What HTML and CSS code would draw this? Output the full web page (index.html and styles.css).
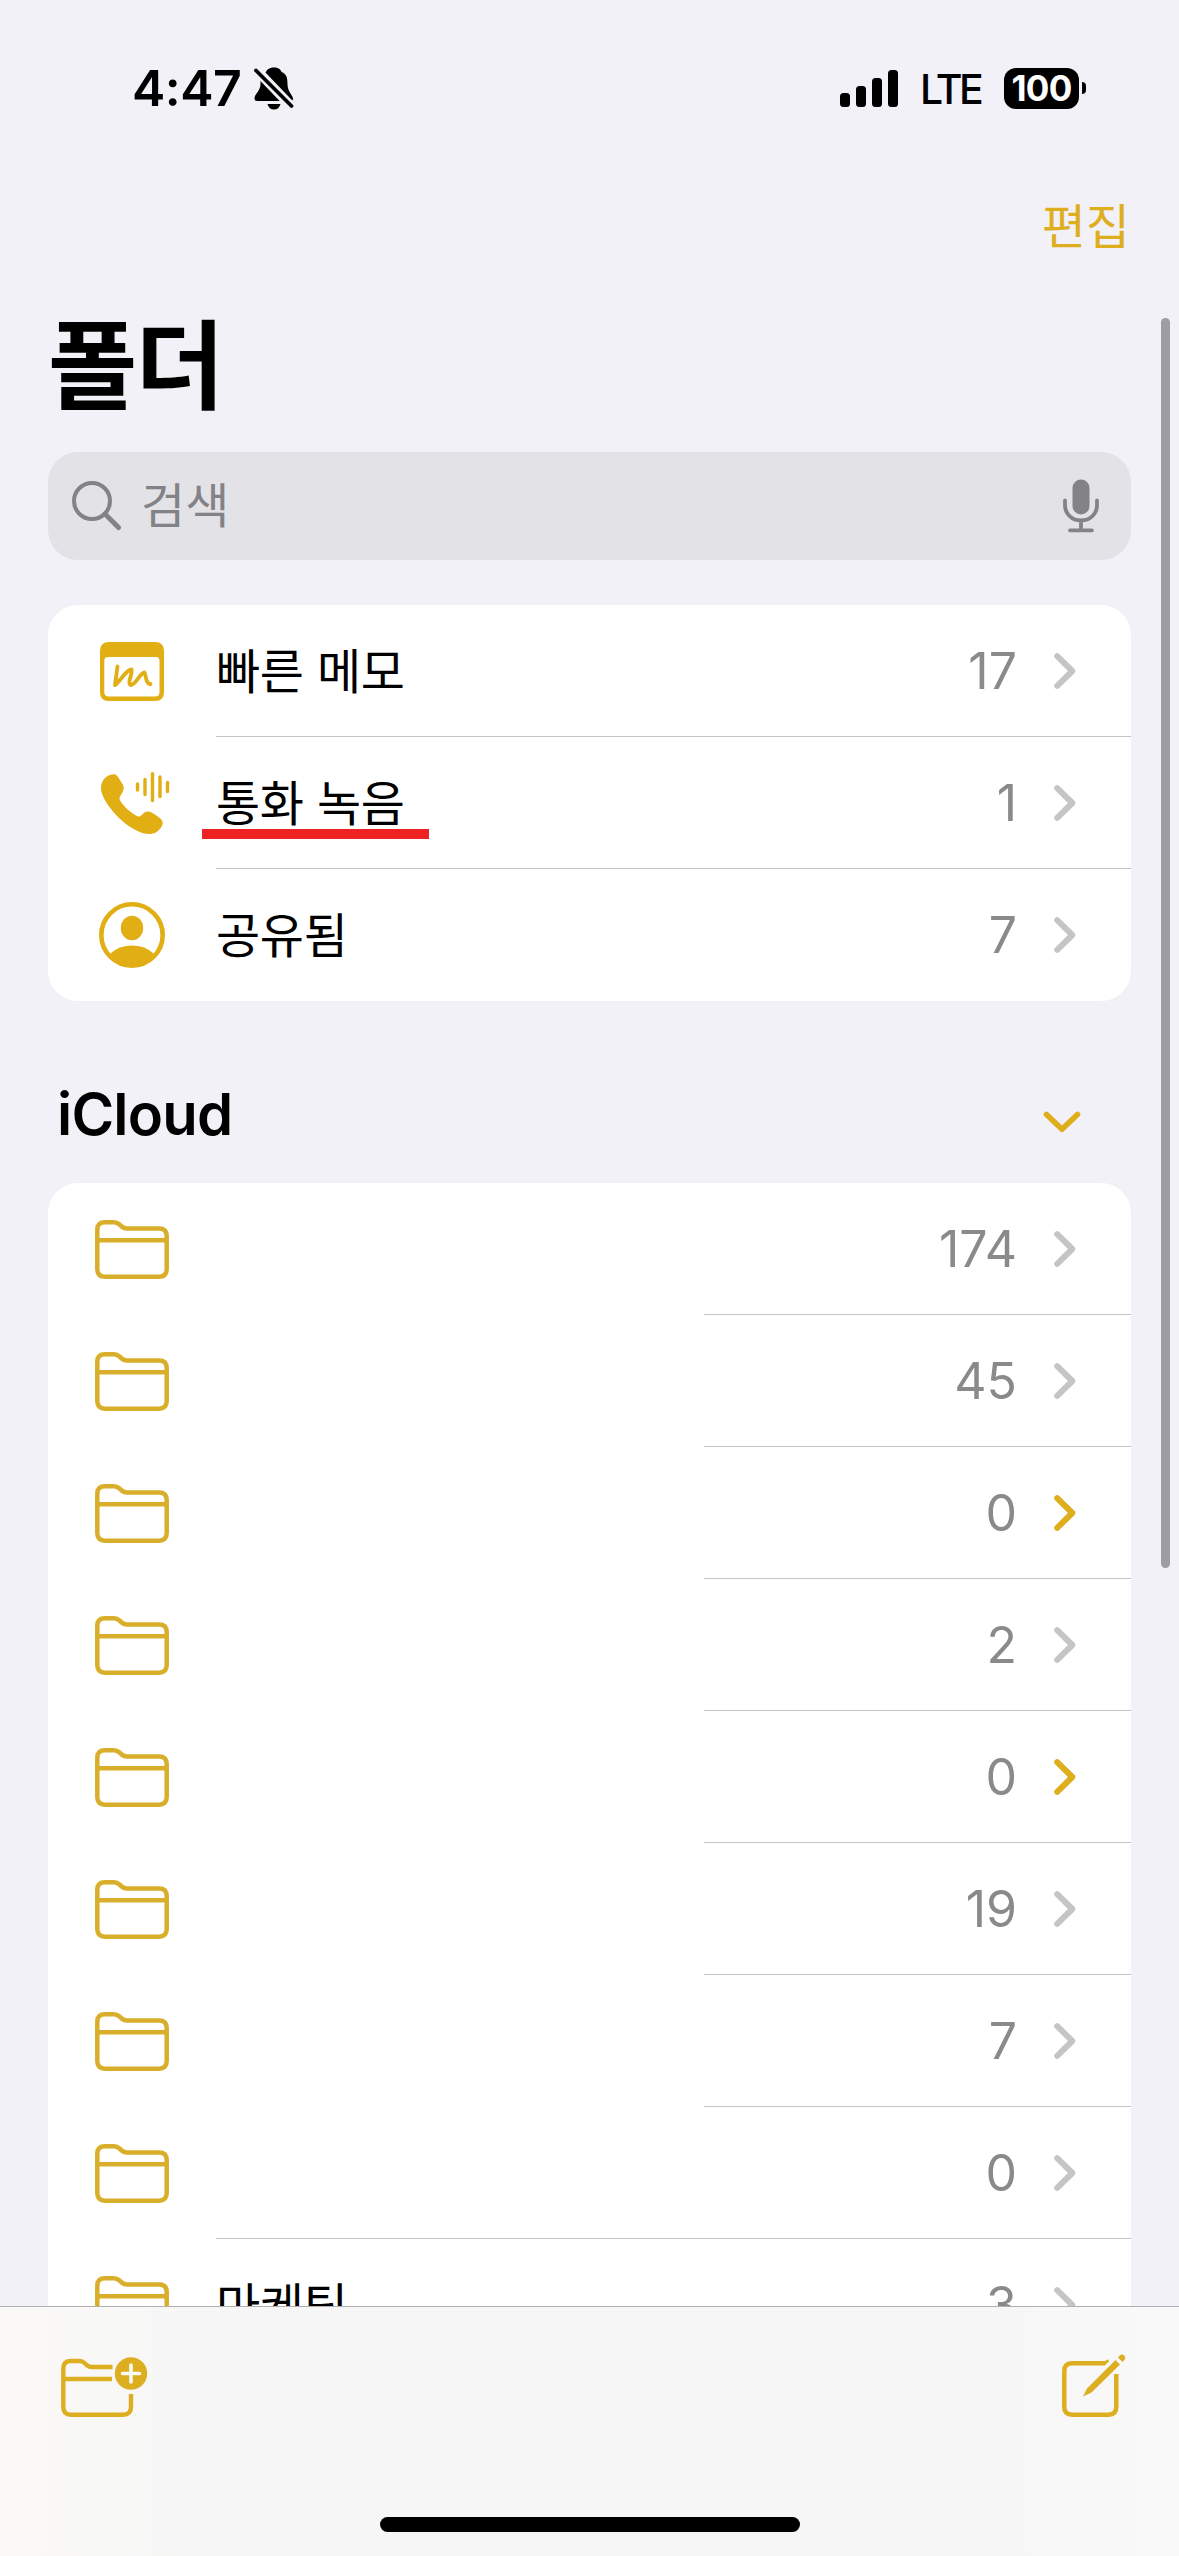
FILE: index.html
```html
<!DOCTYPE html>
<html lang="ko">
<head>
<meta charset="utf-8">
<title>폴더</title>
<link rel="stylesheet" href="styles.css">
</head>
<body>
<svg class="sprite" width="0" height="0" aria-hidden="true">
  <symbol id="folder" viewBox="0 0 74 59">
    <path d="M2.3 50V10Q2.3 2.3 10 2.3H19Q22 2.3 24.5 4.5L27 6.7Q29 8.4 32 8.4H64Q71.7 8.4 71.7 16V49Q71.7 56.7 64 56.7H10Q2.3 56.7 2.3 49ZM2.3 20.3H71.7" fill="none" stroke="currentColor" stroke-width="4.5"/>
  </symbol>
  <symbol id="chevron" viewBox="0 0 22 36">
    <path d="M3.2 3.2L18.3 18L3.2 32.8" fill="none" stroke="currentColor" stroke-width="6" stroke-linecap="round" stroke-linejoin="round"/>
  </symbol>
</svg>
<div class="screen">
  <header class="status">
    <div class="status-left">
      <span class="time">4:47</span>
      <svg class="bell" width="40" height="43" viewBox="0 0 40 43">
        <path d="M20 0.5C15 0.5 12.5 3 12 5C7.5 8 6.5 11.500 6.500 17C6.500 24 0.500 27 0.500 31.500Q0.500 34 3.500 34H36.500Q39 34 39 31.500C38.500 27.500 33.500 25 33.500 17C33.500 10.500 32.500 7 27.500 5C27 2.500 24 0.500 20 0.500Z"/>
        <path d="M13.500 37H26.500Q25 42.500 20 42.500Q15 42.500 13.500 37Z"/>
        <path d="M3 3.500L38 40" stroke="#f2f1f7" stroke-width="9.500"/>
        <path d="M2 3.500L37.500 39" stroke="#000" stroke-width="3.800" stroke-linecap="round"/>
      </svg>
    </div>
    <div class="status-right">
      <div class="signal"><i class="s1"></i><i class="s2"></i><i class="s3"></i><i class="s4"></i></div>
      <span class="net">LTE</span>
      <div class="battery">100</div>
      <div class="nub"></div>
    </div>
  </header>
  <nav class="nav"><span class="edit">편집</span></nav>
  <h1 class="title">폴더</h1>
  <div class="search">
    <svg width="50" height="50" viewBox="0 0 50 50" fill="none" stroke="currentColor">
      <circle cx="20" cy="20" r="18" stroke-width="4"/><path d="M33 33L46.500 46.500" stroke-width="5" stroke-linecap="round"/>
    </svg>
    <span class="placeholder">검색</span>
    <svg class="mic" width="36" height="54" viewBox="0 0 36 54">
      <rect x="9.500" y="0.500" width="17" height="35" rx="8.500" fill="currentColor"/>
      <path d="M2 21.500V26C2 35 9 41.500 18 41.500S34 35 34 26V21.500M18 41.500V51M7 51.300H29" fill="none" stroke="currentColor" stroke-width="3.800" stroke-linecap="round"/>
    </svg>
  </div>

  <section class="card">
    <div class="row">
      <div class="icon"><svg width="64" height="59" viewBox="0 0 64 59">
        <path fill="currentColor" fill-rule="evenodd" d="M9 0H55Q64 0 64 9V50Q64 59 55 59H9Q0 59 0 50V9Q0 0 9 0ZM8 15Q4.300 15 4.300 19V50Q4.300 54.500 9 54.500H55Q59.500 54.500 59.500 50V19Q59.500 15 56 15Z"/>
        <path d="M17.500 24.500L15 43C20 40 26 27.500 31.500 27.500C33 31 27 41 30.500 43C36 43 40 30.500 44.500 30.500C46 34 46 42.500 50.500 42" fill="none" stroke="currentColor" stroke-width="3.800" stroke-linecap="round" stroke-linejoin="round"/>
      </svg></div>
      <div class="cell"><span class="name">빠른 메모</span><span class="count">17</span><svg class="chev"><use href="#chevron"/></svg></div>
    </div>
    <div class="row">
      <div class="icon phone"><svg width="69" height="63" viewBox="0 0 69 63">
        <path fill="currentColor" d="M12.500 2.200C15 2 16 3.500 17.500 5.800L21.500 12C23.500 15 23 18 20.800 21.500L19 24.500C18 26.500 18.500 27.500 20 30C24.500 36 29 40 35 43.500C37.500 45 38.500 45 40 43.500L43.500 40.500C46 39 48.500 39 51.500 41L57.500 45C62 48 63 51 60 55.500C57 60 53 62 48 62C36 62 19 49 10 37C3 28 0 21 0 16C0 10 4 2.800 12.500 2.200Z"/>
        <path d="M36.500 12V18M44 7.500V22.500M51.500 1.700V28.500M59 5V24.500M66.500 10.500V19.500" stroke="currentColor" stroke-width="3.400" stroke-linecap="round"/>
      </svg></div>
      <div class="cell"><span class="name marked">통화 녹음</span><span class="count">1</span><svg class="chev"><use href="#chevron"/></svg></div>
    </div>
    <div class="row">
      <div class="icon"><svg width="66" height="66" viewBox="0 0 66 66">
        <circle cx="33" cy="33" r="30.700" fill="none" stroke="currentColor" stroke-width="4.600"/>
        <ellipse cx="33" cy="26" rx="11.200" ry="12.200" fill="currentColor"/>
        <path d="M11.500 51.500Q20 43.500 33 43.500T54.500 51.500Q46 63 33 63T11.500 51.500Z" fill="currentColor"/>
      </svg></div>
      <div class="cell"><span class="name">공유됨</span><span class="count">7</span><svg class="chev"><use href="#chevron"/></svg></div>
    </div>
  </section>

  <div class="group">
    <h2>iCloud</h2>
    <svg width="38" height="22" viewBox="0 0 38 22"><path d="M3.500 3.500L19 18.300L34.500 3.500" fill="none" stroke="currentColor" stroke-width="5.600" stroke-linecap="round" stroke-linejoin="round"/></svg>
  </div>

  <section class="card folders">
    <div class="row short"><div class="icon"><svg width="74" height="59"><use href="#folder"/></svg></div><div class="cell"><span class="count">174</span><svg class="chev"><use href="#chevron"/></svg></div></div>
    <div class="row short"><div class="icon"><svg width="74" height="59"><use href="#folder"/></svg></div><div class="cell"><span class="count">45</span><svg class="chev"><use href="#chevron"/></svg></div></div>
    <div class="row short"><div class="icon"><svg width="74" height="59"><use href="#folder"/></svg></div><div class="cell"><span class="count">0</span><svg class="chev gold"><use href="#chevron"/></svg></div></div>
    <div class="row short"><div class="icon"><svg width="74" height="59"><use href="#folder"/></svg></div><div class="cell"><span class="count">2</span><svg class="chev"><use href="#chevron"/></svg></div></div>
    <div class="row short"><div class="icon"><svg width="74" height="59"><use href="#folder"/></svg></div><div class="cell"><span class="count">0</span><svg class="chev gold"><use href="#chevron"/></svg></div></div>
    <div class="row short"><div class="icon"><svg width="74" height="59"><use href="#folder"/></svg></div><div class="cell"><span class="count">19</span><svg class="chev"><use href="#chevron"/></svg></div></div>
    <div class="row short"><div class="icon"><svg width="74" height="59"><use href="#folder"/></svg></div><div class="cell"><span class="count">7</span><svg class="chev"><use href="#chevron"/></svg></div></div>
    <div class="row"><div class="icon"><svg width="74" height="59"><use href="#folder"/></svg></div><div class="cell"><span class="count">0</span><svg class="chev"><use href="#chevron"/></svg></div></div>
    <div class="row"><div class="icon"><svg width="74" height="59"><use href="#folder"/></svg></div><div class="cell"><span class="name">마케팅</span><span class="count">3</span><svg class="chev"><use href="#chevron"/></svg></div></div>
  </section>

  <div class="scrollbar"></div>

  <footer class="toolbar">
    <div class="tools">
      <svg width="87" height="60" viewBox="0 0 87 60">
        <path d="M51.500 10H31Q28 10 26 8.300L23.500 6Q21.500 4 18.500 4H10Q2.300 4 2.300 11.500V50Q2.300 57.700 10 57.700H62Q70 57.700 70 50V37M2.300 22H51" fill="none" stroke="currentColor" stroke-width="4.400"/>
        <circle cx="70" cy="16.500" r="16.200" fill="currentColor"/>
        <path d="M70 8V25M61.500 16.500H78.500" stroke="#fafaf6" stroke-width="3.600" stroke-linecap="round"/>
      </svg>
      <svg width="64" height="63" viewBox="0 0 64 63">
        <path d="M47 7L44 9.300H10.500Q2.300 9.300 2.300 17V53Q2.300 60.700 10 60.700H46.500Q54.300 60.700 54.300 53V20" fill="none" stroke="currentColor" stroke-width="4.500"/>
        <path d="M24 39.500L50 13.500L61 2.500" stroke="#f7f7f7" stroke-width="13"/>
        <path d="M53.500 6L58 10.500L29.500 38.500L21 42.500L25 34.500ZM56 3.500L58.200 1.200Q60 -0.200 62 1.300Q64 3.500 62.800 5.500L60.500 7.900Z" fill="currentColor"/>
      </svg>
    </div>
    <div class="home"></div>
  </footer>
</div>
</body>
</html>
```
FILE: styles.css
```css
* { box-sizing: border-box; }
body { margin: 0; }
.sprite { position: absolute; }
svg { display: block; flex: none; }

.screen {
  position: relative;
  display: flex;
  flex-direction: column;
  width: 1179px;
  height: 2556px;
  overflow: hidden;
  background: #f2f1f7;
  color: #000;
  font-family: Inter, "Noto Sans CJK KR", sans-serif;
}

.status {
  display: flex;
  justify-content: space-between;
  align-items: center;
  flex: none;
  height: 176px;
  padding: 0 93px 0 132px;
}
.status-left, .status-right { display: flex; align-items: center; }
.time { font-size: 50px; font-weight: 600; line-height: 60px; width: 122px; letter-spacing: -0.5px; }
.signal { display: flex; align-items: flex-end; gap: 6px; height: 38px; margin-right: 22px; }
.signal i { width: 10px; border-radius: 3.5px; background: #000; }
.s1 { height: 14px; }
.s2 { height: 21px; }
.s3 { height: 29px; }
.s4 { height: 37px; }
.net { width: 84px; padding-top: 2px; font-size: 41px; font-weight: 500; line-height: 50px; letter-spacing: -3.5px; }
.battery {
  width: 75px;
  height: 41px;
  border-radius: 12px;
  background: #000;
  color: #fff;
  font-size: 35px;
  font-weight: 700;
  line-height: 41px;
  text-align: center;
  letter-spacing: -0.7px;
}
.nub { width: 4px; height: 12px; margin-left: 3px; border-radius: 0 6px 6px 0; background: #000; }

.nav {
  display: flex;
  justify-content: flex-end;
  align-items: center;
  flex: none;
  height: 100px;
  padding: 2px 49px 0 0;
}
.edit { color: #dfae1e; font-size: 48px; line-height: 60px; }
.title {
  flex: none;
  height: 176px;
  margin: 0;
  padding: 2px 0 0 48px;
  font-size: 97px;
  font-weight: 700;
  line-height: 176px;
  letter-spacing: -2px;
}

.search {
  display: flex;
  align-items: center;
  flex: none;
  height: 108px;
  margin: 0 48px;
  padding: 0 32px 0 24px;
  border-radius: 30px;
  background: #e3e2e7;
  color: #838387;
}
.placeholder { flex: 1; margin-left: 19px; font-size: 48px; line-height: 60px; }

.card {
  flex: none;
  margin: 45px 48px 0;
  border-radius: 30px;
  background: #fff;
  overflow: hidden;
}
.folders { margin-top: 0; }
.row { display: flex; height: 132px; }
.icon {
  display: flex;
  align-items: center;
  justify-content: center;
  flex: none;
  width: 168px;
  color: #e1ae13;
}
.folders .icon { color: #d9ae2a; }
.phone { padding-left: 6px; }
.cell {
  display: flex;
  align-items: center;
  flex: 1;
  padding-right: 55px;
  border-bottom: 1px solid #c5c5c8;
}
.short .cell { margin-left: 488px; }
.row:last-child .cell { border-bottom-color: transparent; }
.name { padding-top: 2px; font-size: 48px; line-height: 60px; letter-spacing: -0.3px; }
.marked { position: relative; }
.marked::after {
  content: "";
  position: absolute;
  left: -14px;
  top: 57px;
  width: 227px;
  height: 10px;
  background: #ef2223;
}
.count { margin-left: auto; color: #8a8a8c; font-size: 50px; line-height: 60px; }
.chev { width: 22px; height: 36px; margin-left: 37px; color: #c5c5c7; }
.chev.gold { color: #deae1c; }

.group {
  display: flex;
  align-items: center;
  justify-content: space-between;
  flex: none;
  height: 182px;
  padding: 44px 98px 0 57px;
  color: #deae1c;
}
.group h2 { margin: 0; color: #000; font-size: 58px; font-weight: 600; line-height: 70px; letter-spacing: -0.8px; }
.group svg { margin-top: 15px; }

.scrollbar {
  position: absolute;
  left: 1161px;
  top: 318px;
  width: 9px;
  height: 1250px;
  border-radius: 5px;
  background: #9d9da2;
}

.toolbar {
  position: absolute;
  left: 0;
  right: 0;
  bottom: 0;
  display: flex;
  flex-direction: column;
  justify-content: space-between;
  align-items: center;
  height: 250px;
  padding: 47px 0 24px;
  border-top: 1px solid #b0b0b3;
  background: linear-gradient(90deg, #faf9f7, #f6f6f6 20%, #f6f6f6 80%, #f9f9fa);
}
.tools {
  display: flex;
  justify-content: space-between;
  align-items: flex-end;
  width: 100%;
  padding: 0 53px 0 61px;
  color: #dcae20;
}
.home { width: 420px; height: 15px; border-radius: 8px; background: #000; }
```
